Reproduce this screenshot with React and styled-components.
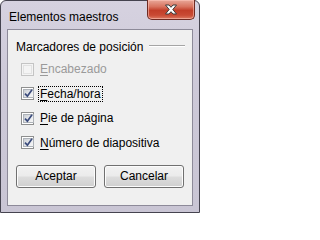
import React from 'react';
import styled, { createGlobalStyle } from 'styled-components';

const GlobalStyle = createGlobalStyle`
  html, body {
    margin: 0;
    padding: 0;
    background: #ffffff;
  }
  * {
    box-sizing: border-box;
  }
`;

const Window = styled.div`
  width: 200px;
  height: 213px;
  display: flex;
  flex-direction: column;
  padding: 0 6px 6px 6px;
  border: 1px solid #45434f;
  border-radius: 6px 6px 0 0;
  background: linear-gradient(180deg, #d6d2e0 0%, #cdc9d8 40%, #c9c5d4 100%);
  font-family: 'Liberation Sans', Arial, sans-serif;
  font-size: 12px;
  color: #000;
`;

const TitleBar = styled.div`
  height: 28px;
  display: flex;
  align-items: flex-start;
`;

const Title = styled.span`
  padding: 9px 0 0 2px;
  line-height: 14px;
  color: #000;
`;

const CloseButton = styled.div`
  margin: -1px -2px 0 auto;
  width: 48px;
  height: 20px;
  display: flex;
  align-items: center;
  justify-content: center;
  border: 1px solid #6e2a22;
  border-top: none;
  border-radius: 0 0 5px 5px;
  background: linear-gradient(180deg, #e9a899 0%, #d8735f 35%, #c23e29 55%, #c94a34 80%, #dc7a62 100%);
  box-shadow: inset 0 0 0 1px rgba(255, 200, 190, 0.55);
`;

const Client = styled.div`
  flex: 1;
  display: flex;
  flex-direction: column;
  border: 1px solid #8d8a99;
  background: #f0f0f0;
  padding: 9px 7px 0 8px;
`;

const GroupHeader = styled.div`
  display: flex;
  align-items: center;
  gap: 6px;
  height: 16px;
  margin-bottom: 2px;
`;

const GroupLine = styled.div`
  flex: 1;
  height: 2px;
  border-top: 1px solid #a5a5a5;
  border-bottom: 1px solid #ffffff;
  margin-top: -2px;
`;

const Options = styled.div`
  display: flex;
  flex-direction: column;
  padding-left: 5px;
`;

const Row = styled.label`
  height: 24.5px;
  display: flex;
  align-items: center;
  gap: 4px;
  color: ${(p) => (p.disabled ? '#9a9a9a' : '#000')};
`;

const BoxFrame = styled.span`
  width: 13px;
  height: 13px;
  display: flex;
  border: 1px solid ${(p) => (p.disabled ? '#c4c4c4' : '#8e8f8f')};
  background: ${(p) => (p.disabled ? '#f4f4f4' : '#ffffff')};
  padding: 1px;
`;

const BoxInner = styled.span`
  flex: 1;
  display: flex;
  align-items: center;
  justify-content: center;
  border: 1px solid ${(p) => (p.disabled ? '#e2e2e2' : '#aeb3b9')};
  background: ${(p) =>
    p.disabled ? '#f4f4f4' : 'linear-gradient(135deg, #cbcfd5 0%, #e9ebee 60%, #f6f6f6 100%)'};
`;

const Label = styled.span`
  line-height: 14px;
  padding: 0 1px;
  border: 1px ${(p) => (p.focused ? 'dotted #000' : 'solid transparent')};
`;

const Key = styled.span`
  text-decoration: underline;
  text-underline-offset: 2px;
`;

const Buttons = styled.div`
  display: flex;
  gap: 8px;
  margin-top: 9.5px;
`;

const Button = styled.button`
  width: 80px;
  height: 23px;
  padding: 0;
  border: 1px solid #707070;
  border-radius: 3px;
  background: linear-gradient(180deg, #f2f2f2 0%, #ebebeb 48%, #dddddd 52%, #cfcfcf 100%);
  box-shadow: inset 0 0 0 1px #fcfcfc;
  font-family: inherit;
  font-size: 12px;
  color: #000;
`;

const CheckMark = () => (
  <svg width="9" height="9" viewBox="0 0 9 9">
    <path d="M1 4.6 L3.4 7.2 L8 0.8" fill="none" stroke="#3a4b7c" strokeWidth="1.7" />
  </svg>
);

const CloseGlyph = () => (
  <svg width="14" height="11" viewBox="0 0 14 11">
    <path
      d="M1.5 1 H5 L7 3.3 L9 1 H12.5 L8.8 5.5 L12.5 10 H9 L7 7.7 L5 10 H1.5 L5.2 5.5 Z"
      fill="#ffffff"
      stroke="#3b3b3b"
      strokeWidth="1"
      strokeLinejoin="round"
    />
  </svg>
);

const Checkbox = ({ checked, disabled }) => (
  <BoxFrame disabled={disabled}>
    <BoxInner disabled={disabled}>{checked && <CheckMark />}</BoxInner>
  </BoxFrame>
);

const options = [
  { key: 'E', rest: 'ncabezado', checked: false, disabled: true },
  { key: 'F', rest: 'echa/hora', checked: true, focused: true },
  { key: 'P', rest: 'ie de página', checked: true },
  { key: 'N', rest: 'úmero de diapositiva', checked: true },
];

const App = () => (
  <>
    <GlobalStyle />
    <Window>
      <TitleBar>
        <Title>Elementos maestros</Title>
        <CloseButton>
          <CloseGlyph />
        </CloseButton>
      </TitleBar>
      <Client>
        <GroupHeader>
          <span>Marcadores de posición</span>
          <GroupLine />
        </GroupHeader>
        <Options>
          {options.map((o) => (
            <Row key={o.key} disabled={o.disabled}>
              <Checkbox checked={o.checked} disabled={o.disabled} />
              <Label focused={o.focused}>
                <Key>{o.key}</Key>
                {o.rest}
              </Label>
            </Row>
          ))}
        </Options>
        <Buttons>
          <Button>Aceptar</Button>
          <Button>Cancelar</Button>
        </Buttons>
      </Client>
    </Window>
  </>
);

export default App;
